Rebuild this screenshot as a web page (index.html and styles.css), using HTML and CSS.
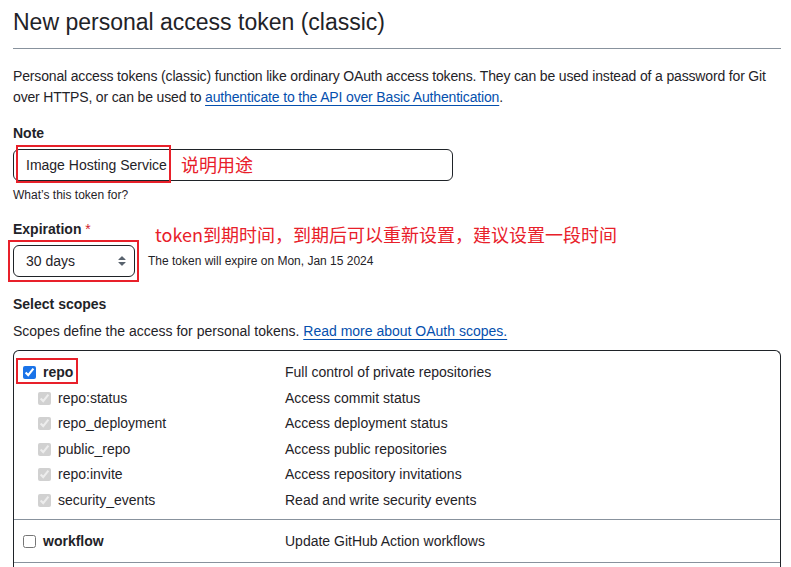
FILE: index.html
```html
<!DOCTYPE html>
<html lang="en">
<head>
<meta charset="utf-8">
<title>New personal access token (classic)</title>
<link rel="stylesheet" href="styles.css">
</head>
<body>
<main class="page">
  <h1 class="title">New personal access token (classic)</h1>
  <p class="intro">Personal access tokens (classic) function like ordinary OAuth access tokens. They can be used instead of a password for Git over HTTPS, or can be used to <a href="#">authenticate to the API over Basic Authentication</a>.</p>

  <div class="field">
    <label class="label">Note</label>
    <div class="note-row">
      <div class="input">Image Hosting Service</div>
      <span class="mark mark-note"></span>
      <span class="annot annot-note">说明用途</span>
    </div>
    <div class="hint">What’s this token for?</div>
  </div>

  <div class="field field-exp">
    <label class="label">Expiration <span class="req">*</span></label>
    <span class="annot annot-exp">token到期时间，到期后可以重新设置，建议设置一段时间</span>
    <div class="exp-row">
      <div class="select">
        <span>30 days</span>
        <svg class="caret" viewBox="0 0 16 16" width="16" height="16" aria-hidden="true"><path fill="#59636e" d="M4.427 9.427l3.396 3.396a.25.25 0 00.354 0l3.396-3.396A.25.25 0 0011.396 9H4.604a.25.25 0 00-.177.427zM4.427 6.573l3.396-3.396a.25.25 0 01.354 0l3.396 3.396A.25.25 0 0111.396 7H4.604a.25.25 0 01-.177-.427z"/></svg>
      </div>
      <span class="mark mark-exp"></span>
      <span class="expire-note">The token will expire on Mon, Jan 15 2024</span>
    </div>
  </div>

  <div class="field field-scopes">
    <div class="label">Select scopes</div>
    <p class="scopes-desc">Scopes define the access for personal tokens. <a href="#">Read more about OAuth scopes.</a></p>
  </div>

  <div class="scopes">
    <div class="group">
      <div class="row main">
        <div class="name"><input type="checkbox" checked><span class="bold">repo</span></div>
        <div class="desc">Full control of private repositories</div>
        <span class="mark mark-repo"></span>
      </div>
      <div class="row sub">
        <div class="name"><input type="checkbox" checked disabled><span>repo:status</span></div>
        <div class="desc">Access commit status</div>
      </div>
      <div class="row sub">
        <div class="name"><input type="checkbox" checked disabled><span>repo_deployment</span></div>
        <div class="desc">Access deployment status</div>
      </div>
      <div class="row sub">
        <div class="name"><input type="checkbox" checked disabled><span>public_repo</span></div>
        <div class="desc">Access public repositories</div>
      </div>
      <div class="row sub">
        <div class="name"><input type="checkbox" checked disabled><span>repo:invite</span></div>
        <div class="desc">Access repository invitations</div>
      </div>
      <div class="row sub">
        <div class="name"><input type="checkbox" checked disabled><span>security_events</span></div>
        <div class="desc">Read and write security events</div>
      </div>
    </div>
    <div class="group group-wf">
      <div class="row main">
        <div class="name"><input type="checkbox"><span class="bold">workflow</span></div>
        <div class="desc">Update GitHub Action workflows</div>
      </div>
    </div>
  </div>
</main>
</body>
</html>
```

FILE: styles.css
```css
* { box-sizing: border-box; }
html, body { margin: 0; padding: 0; background: #fff; }
body {
  font-family: "Liberation Sans", "Noto Sans CJK SC", sans-serif;
  font-size: 14px;
  line-height: 21px;
  color: #1f2328;
  overflow: hidden;
}
.page {
  width: 768px;
  margin-left: 13px;
}
.title {
  margin: 0;
  padding: 4px 0 8px;
  font-size: 23px;
  line-height: 36px;
  font-weight: 400;
  border-bottom: 1px solid #88929d;
}
.intro {
  margin: 17px 0 0;
  letter-spacing: -0.16px;
}
a { color: #0550ae; text-decoration: underline; text-underline-offset: 3px; }
.field { margin-top: 15px; position: relative; }
.label {
  display: block;
  font-weight: 700;
  line-height: 21px;
}
.req { color: #cf222e; font-weight: 400; }
.note-row {
  position: relative;
  margin-top: 5px;
  display: flex;
  align-items: center;
}
.input {
  width: 440px;
  height: 32px;
  border: 1px solid #1f2328;
  border-radius: 6px;
  padding: 0 12px;
  line-height: 30px;
}
.mark {
  position: absolute;
  border: 2px solid #e8202a;
  pointer-events: none;
}
.mark-note { left: 3px; top: -4px; width: 155px; height: 38px; }
.annot {
  color: #e8202a;
  font-family: "Noto Sans CJK SC", "Liberation Sans", sans-serif;
  font-size: 18px;
}
.annot-note {
  position: absolute;
  left: 168px;
  top: 3px;
  line-height: 24px;
}
.hint {
  margin-top: 5px;
  font-size: 12px;
  line-height: 18px;
}
.annot-exp {
  position: absolute;
  left: 142px;
  top: 3px;
  line-height: 24px;
  white-space: nowrap;
}
.exp-row {
  position: relative;
  margin-top: 5px;
  display: flex;
  align-items: center;
}
.select {
  width: 122px;
  height: 32px;
  border: 1px solid #1f2328;
  border-radius: 6px;
  padding: 0 4px 0 12px;
  display: flex;
  align-items: center;
  justify-content: space-between;
}
.caret { display: block; }
.mark-exp { left: -5px; top: -5px; width: 131px; height: 42px; }
.expire-note {
  margin-left: 13px;
  font-size: 12px;
}
.field-scopes { margin-top: 17px; }
.scopes-desc { margin: 6px 0 0; }
.scopes {
  margin-top: 8px;
  border: 1px solid #1f2328;
  border-bottom: 0;
  border-radius: 6px 6px 0 0;
  height: 230px;
}
.group { padding: 9px 0 6px; }
.group-wf { border-top: 1px solid #88929d; border-bottom: 1px solid #88929d; padding: 9px 0 7px; }
.row {
  position: relative;
  display: grid;
  grid-template-columns: 271px 1fr;
  height: 25.5px;
  align-items: center;
}
.name {
  display: flex;
  align-items: center;
  padding-left: 9px;
}
.sub .name { padding-left: 24px; }
.name input {
  margin: 0 7px 0 0;
  width: 13px;
  height: 13px;
  accent-color: #1a73e8;
}
.bold { font-weight: 700; }
.mark-repo { left: 2px; top: -2px; width: 62px; height: 26px; }
```
